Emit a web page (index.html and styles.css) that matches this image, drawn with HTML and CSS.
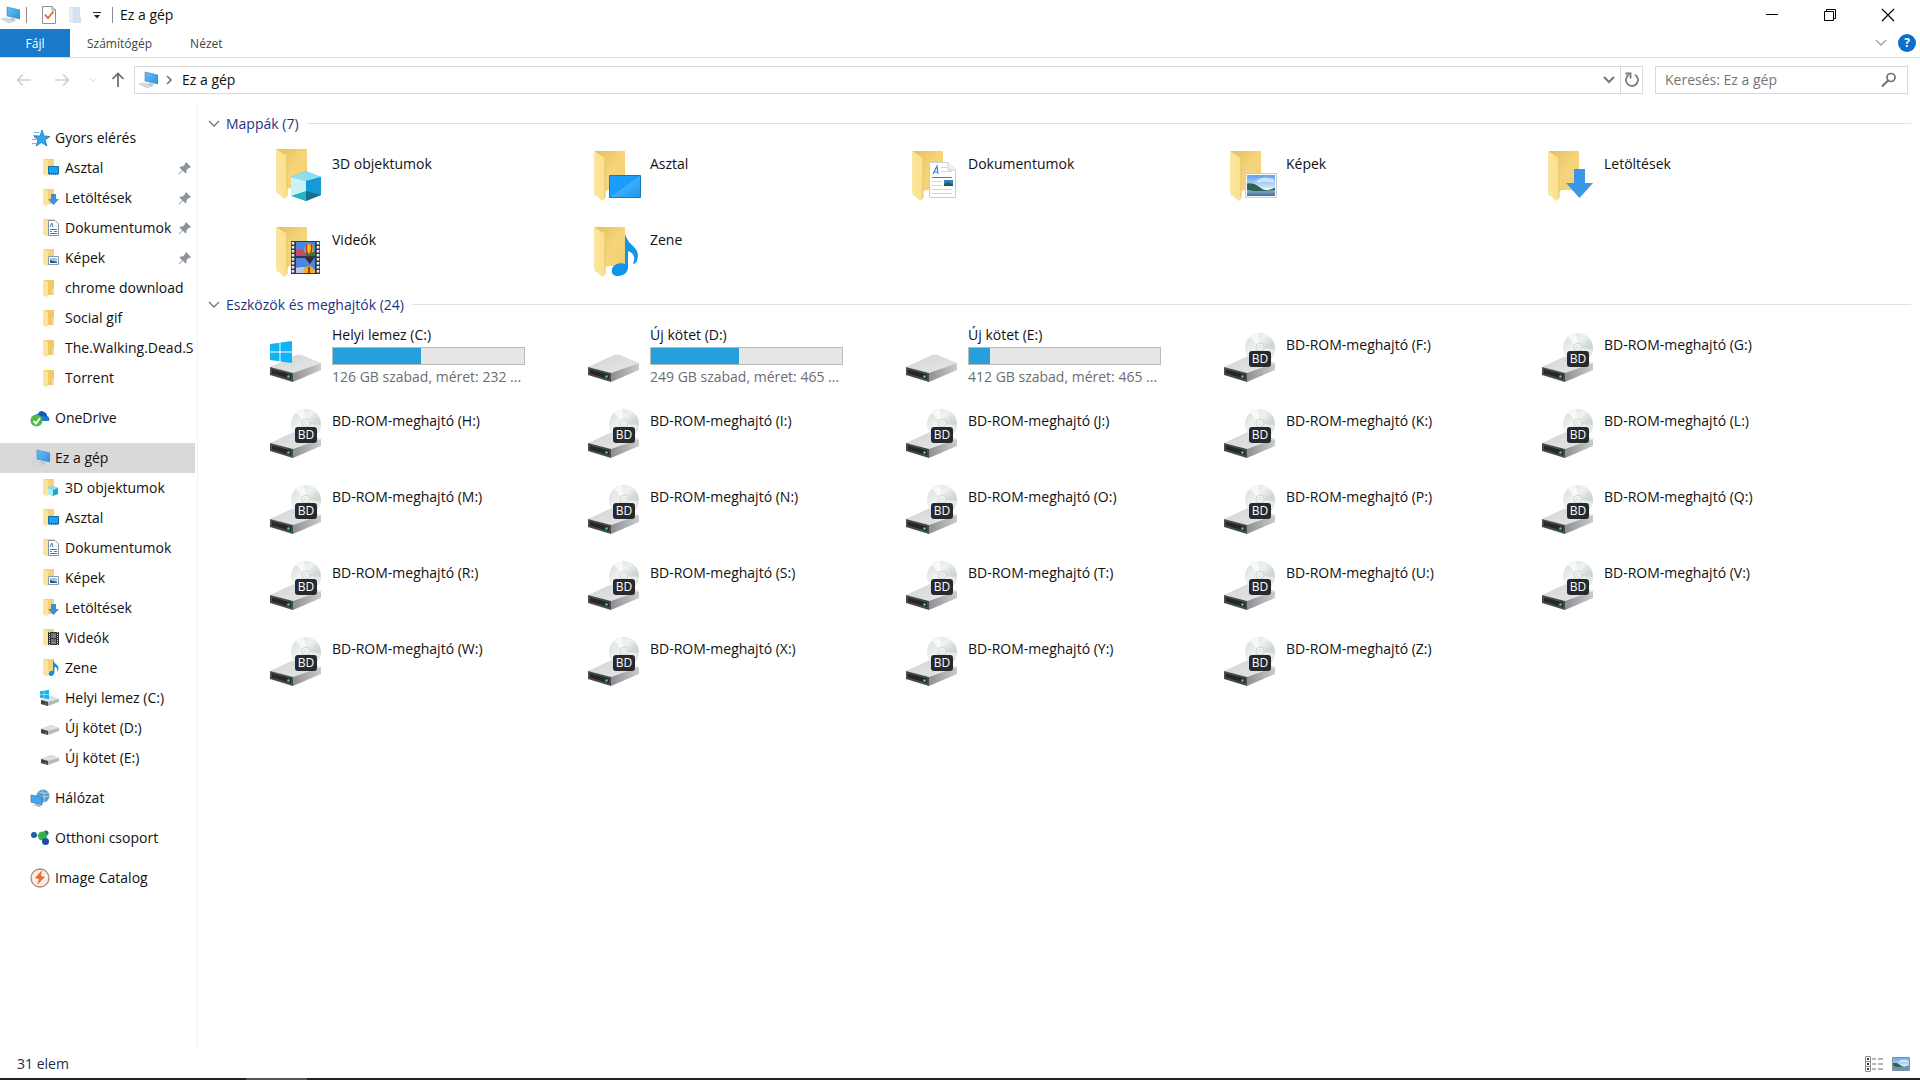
FILE: index.html
```html
<!DOCTYPE html>
<html lang="hu">
<head>
<meta charset="utf-8">
<title>Ez a gép</title>
<meta name="viewport" content="width=device-width, initial-scale=1">
<link rel="stylesheet" href="styles.css">
</head>
<body>
<svg class="sprite" aria-hidden="true">
  <defs>
    <linearGradient id="g-flap" x1="0" y1="0" x2="1" y2="0"><stop offset="0" stop-color="#fbe6a0"/><stop offset="1" stop-color="#fbdf8b"/></linearGradient>
    <linearGradient id="g-back" x1="0" y1="0" x2="1" y2="1"><stop offset="0" stop-color="#e5bf5b"/><stop offset=".5" stop-color="#f6d47a"/><stop offset="1" stop-color="#f2cd6c"/></linearGradient>
    <linearGradient id="g-screen" x1="0" y1="0" x2="1" y2="1"><stop offset="0" stop-color="#18a0fb"/><stop offset=".5" stop-color="#1b9cf7"/><stop offset=".51" stop-color="#3dadfa"/><stop offset="1" stop-color="#1a96f2"/></linearGradient>
    <linearGradient id="g-monitor" x1="0" y1="0" x2="1" y2="1"><stop offset="0" stop-color="#64c1f7"/><stop offset="1" stop-color="#2b93de"/></linearGradient>
    <linearGradient id="g-top" x1="0" y1="0" x2="1" y2="1"><stop offset="0" stop-color="#d3d4d6"/><stop offset="1" stop-color="#e6e7e9"/></linearGradient>
    <linearGradient id="g-side" x1="0" y1="0" x2="1" y2="0"><stop offset="0" stop-color="#8d8f92"/><stop offset="1" stop-color="#c9cbcd"/></linearGradient>
    <linearGradient id="g-disc" x1="0" y1="0" x2="1" y2="1"><stop offset="0" stop-color="#d4d8d6"/><stop offset=".4" stop-color="#eef2f0"/><stop offset=".6" stop-color="#d3dbd7"/><stop offset="1" stop-color="#bfc4c2"/></linearGradient>
    <linearGradient id="g-sky" x1="0" y1="0" x2="0" y2="1"><stop offset="0" stop-color="#5f9df0"/><stop offset="1" stop-color="#dcecf8"/></linearGradient>
    <linearGradient id="g-water" x1="0" y1="0" x2="0" y2="1"><stop offset="0" stop-color="#8fb4c9"/><stop offset="1" stop-color="#456f95"/></linearGradient>
  </defs>

  <symbol id="folder" viewBox="0 0 60 60">
    <path d="M11 7H41V46H24L11 52Z" fill="url(#g-back)"/>
    <path d="M10 7L21 14V54Q20 58 17 56L10 49Z" fill="url(#g-flap)"/>
    <path d="M21 14V54" stroke="#e6c468"/>
  </symbol>
  <symbol id="folder-3d" viewBox="0 0 60 60">
    <use href="#folder" y="-2"/>
    <path d="M25 33L40 27 55 33V51L40 57 25 51Z" fill="#2bb5dc"/>
    <path d="M25 33L40 27 55 33 40 37Z" fill="#8bdff0"/>
    <path d="M25 33L40 37V48L25 52Z" fill="#c9f3f4"/>
    <path d="M55 33L40 37V50L55 51Z" fill="#129bd6"/>
    <path d="M25 52L40 47V57Z" fill="#25b4c6"/><path d="M55 51L40 47V57Z" fill="#16708d"/>
  </symbol>
  <symbol id="folder-desktop" viewBox="0 0 60 60">
    <use href="#folder"/><path d="M25.500 31.500H56.500V53.500H25.500Z" fill="url(#g-screen)" stroke="#1779c4"/>
  </symbol>
  <symbol id="folder-docs" viewBox="0 0 60 60">
    <use href="#folder"/>
    <path d="M27.500 18.500H46L53.500 26V53.500H27.500Z" fill="#fff" stroke="#c9d0d5"/>
    <path d="M46 18.500V26H53.500" fill="#eef1f3" stroke="#c9d0d5"/>
    <path d="M31 30L35 22 36 30M32 28H36M30 33.500H50" fill="none" stroke="#2a8bd0" stroke-width="1.200"/>
    <path d="M39 23.500H45M39 27.500H50M30 37.500H40M30 41.500H40M30 45.500H50M30 49.500H50" stroke="#cfd8df"/>
    <path d="M42 36H51V42H42Z" fill="#2d83bd"/><path d="M42 40L46 38 51 41V42H42Z" fill="#295a52"/>
  </symbol>
  <symbol id="landscape" viewBox="0 0 32 24" preserveAspectRatio="none">
    <path d="M.5.500H31.500V23.500H.5Z" fill="#f7fafc" stroke="#c3cedb"/>
    <path d="M2 2H30V15H2Z" fill="url(#g-sky)"/>
    <path d="M12 7Q18 2 29 6V9Q20 8 12 9Z" fill="#fff" opacity=".6"/>
    <path d="M2 10Q9 9 15 14T30 14V18H2Z" fill="#2f6152"/>
    <path d="M2 16Q16 19 30 16V22H2Z" fill="url(#g-water)"/>
  </symbol>
  <symbol id="folder-pics" viewBox="0 0 60 60"><use href="#folder"/><use href="#landscape" x="25" y="29" width="32" height="25"/></symbol>
  <symbol id="folder-down" viewBox="0 0 60 60">
    <use href="#folder"/><path d="M36 25H47V39H55L41.500 54 28 39H36Z" fill="#3a97e8"/>
  </symbol>
  <symbol id="folder-video" viewBox="0 0 60 60">
    <use href="#folder"/>
    <path d="M25 21H54V54H25Z" fill="#333941"/>
    <path d="M27 22V53M52 22V53" stroke="#f0f0f0" stroke-width="2.500" stroke-dasharray="2.500 1.500"/>
    <path d="M30 22H49V36H30ZM30 38H49V53H30Z" fill="#4b86e4"/>
    <path d="M30 30Q35 27 39 33T49 33V36H30Z" fill="#c84b5d"/><path d="M40 32H49V36H40Z" fill="#2f7a3e"/>
    <path d="M30 48Q38 45 49 50V53H30Z" fill="#b9c9e9"/>
    <ellipse cx="43" cy="29" rx="4.500" ry="5" fill="#f6c21c"/><path d="M41 24.500Q39 29 42 34M45 24.500Q47 29 44 34" stroke="#c02c24" stroke-width="1.500" fill="none"/>
    <path d="M39 38H48L44 44Z" fill="#3a2530"/><path d="M37 53Q38 46 43 46T49 53Z" fill="#eeb023"/><path d="M43 47V53" stroke="#c02c24" stroke-width="2"/>
  </symbol>
  <symbol id="folder-music" viewBox="0 0 60 60">
    <use href="#folder"/>
    <path d="M41 14Q43 21 49 26 57 33 52 43L49 44Q53 34 44 31V47C44 53 39 56 34 56S27 53 28 49 35 42 41 44Z" fill="#0f95ea"/>
  </symbol>

  <symbol id="drive" viewBox="0 0 60 60">
    <path d="M4 42L30 30Q33 29 36 30L55 38 27 48Z" fill="url(#g-top)"/>
    <path d="M27 48L55 38V45L27 57Z" fill="url(#g-side)"/>
    <path d="M4 42L27 48V57L4 50Z" fill="#47494b"/>
    <path d="M6 44.500L25 49.500V54L6 48.500Z" fill="#242627"/>
    <circle cx="22.500" cy="51.500" r="1.300" fill="#43dc58"/>
  </symbol>
  <symbol id="winlogo" viewBox="0 0 22 22"><path d="M0 3L9.500 1.700V10.500H0ZM10.500 1.500L22 0V10.500H10.500ZM0 11.500H9.500V20.300L0 19ZM10.500 11.500H22V22L10.500 20.500Z" fill="#0fb5f2"/></symbol>
  <symbol id="drive-win" viewBox="0 0 60 60"><use href="#drive"/><use href="#winlogo" x="4" y="16" width="22" height="22"/></symbol>
  <symbol id="drive-bd" viewBox="0 0 60 60">
    <use href="#drive"/>
    <circle cx="40" cy="23" r="15" fill="url(#g-disc)"/>
    <path d="M40 23L30 12A15 15 0 0 1 38 8Z" fill="#fff" opacity=".7"/><path d="M40 23L52 32A15 15 0 0 0 55 24Z" fill="#fff" opacity=".5"/>
    <circle cx="40" cy="22" r="4" fill="#f3f5f4" stroke="#cfd6d2"/><circle cx="40" cy="22" r="1.500" fill="#fff" stroke="#bbb" stroke-width=".5"/>
  </symbol>

  <!-- Small versions for the navigation pane and the title bar -->
  <symbol id="s-folder" viewBox="0 0 20 20"><path d="M4 2H14V17H8L4 18Z" fill="#f1ca66"/><path d="M3 2L8 4V18L6 19 3 17Z" fill="#fbe4a0"/><path d="M12 11L14 10V16L12 17Z" fill="#f9dd90"/></symbol>
  <symbol id="s-base" viewBox="0 0 20 20"><path d="M4 1H14V16H8L4 17Z" fill="#f3d27b"/><path d="M3 1L8 3V17L6 18 3 16Z" fill="#fbe4a0"/></symbol>
  <symbol id="s-desktop" viewBox="0 0 20 20"><use href="#s-base"/><path d="M8.500 8.500H18.500V16H8.500Z" fill="#18a4f4" stroke="#176ca5"/><path d="M9 16H18" stroke="#123f66" stroke-dasharray="1 1"/></symbol>
  <symbol id="s-down" viewBox="0 0 20 20"><use href="#s-base"/><path d="M11 6H16V11H19L13.500 17 8 11H11Z" fill="#3b8dde"/></symbol>
  <symbol id="s-docs" viewBox="0 0 20 20"><use href="#s-base"/><path d="M8.500 2.500H15L18.500 6V17.500H8.500Z" fill="#fff" stroke="#8396a5"/><path d="M10 9L12 5 13 9M10 11.500H17M10 13.500H12M14 13.500H17M10 15.500H17" fill="none" stroke="#2e86c2"/></symbol>
  <symbol id="s-pics" viewBox="0 0 20 20"><use href="#s-base"/><path d="M8.500 8.500H18.500V16.500H8.500Z" fill="#fff" stroke="#8c9cad"/><path d="M10 10H17V15H10Z" fill="#9fc7ea"/><path d="M10 12L17 14V15H10Z" fill="#2d5f7d"/></symbol>
  <symbol id="s-3d" viewBox="0 0 20 20"><use href="#s-base"/><path d="M8 10L13 8 18 10V16L13 18 8 16Z" fill="#1aa7d8"/><path d="M8 10L13 8 18 10 13 12Z" fill="#8be0f0"/><path d="M8 10L13 12V18L8 16Z" fill="#aeeef0"/></symbol>
  <symbol id="s-video" viewBox="0 0 20 20"><use href="#s-base"/><path d="M8 4H19V17H8Z" fill="#2e3034"/><path d="M9.500 4V17M17.500 4V17" stroke="#ddd" stroke-dasharray="1 1"/><path d="M11 5H16V10H11ZM11 11H16V16H11Z" fill="#6a6f8e"/><path d="M13 7H16V10H13ZM12 14H15V16H12Z" fill="#a07a5a"/></symbol>
  <symbol id="s-music" viewBox="0 0 20 20"><use href="#s-base"/><path d="M13 2Q14 5 17 7 20 10 17 14 18 9 14.500 9V14Q14 18 11 18T9 15 13 13Z" fill="#158ee0"/></symbol>
  <symbol id="s-drive" viewBox="0 0 20 20"><path d="M1 11L11 7 19 10V13L8 17 1 15Z" fill="#b6b8ba"/><path d="M1 11L11 7 19 10 8 13Z" fill="#dedfe1"/><path d="M1 11L8 13V17L1 15Z" fill="#3f4143"/><path d="M5 15H7" stroke="#57a564"/></symbol>
  <symbol id="s-drive-win" viewBox="0 0 20 20"><use href="#s-drive" y="1"/><use href="#winlogo" x="0" y="2" width="9" height="9"/></symbol>
  <symbol id="s-pc" viewBox="0 0 20 20"><path d="M7 2L20 5V14L7 11Z" fill="url(#g-monitor)" stroke="#3c83b9" stroke-width=".6"/><path d="M11 13L16 14 14 16 9 15Z" fill="#b9c4cc"/><path d="M1 14L6 13 15 16 9 18Z" fill="#d4dade" stroke="#b9c1c7" stroke-width=".5"/></symbol>
  <symbol id="s-star" viewBox="0 0 20 20"><path d="M12 2L14 8 20 8.500 15 12 17 18 11.500 14.500 6 18 8 12 4 8.500 10 8Z" fill="#33a5ec" stroke="#1c77bd" stroke-width=".8"/><path d="M4 4.500H9M3 7.500H8M2 11.500H6M2 15.500H6" stroke="#68b9ec"/></symbol>
  <symbol id="s-cloud" viewBox="0 0 20 20"><path d="M5 10Q4 6 8 6 10 1 14 4 17 5 17 8 20 9 19 13H6Z" fill="#0c5bb0"/><path d="M8 13Q7 9 11 9 13 6 16 9 20 9 19 13Z" fill="#1a7ad6"/><circle cx="6.500" cy="12.500" r="6" fill="#4fb944"/><path d="M3.500 13L6 15.500 10 10" fill="none" stroke="#fff" stroke-width="1.800"/></symbol>
  <symbol id="s-net" viewBox="0 0 20 20"><circle cx="13" cy="8" r="6.500" fill="#5a9cc9"/><path d="M9 4Q13 6 18 5M8 8Q14 10 19 8M12 2Q16 7 14 14" fill="none" stroke="#a7d3ee"/><path d="M1 7L12 9V17L1 14Z" fill="#43a7ec" stroke="#2779b4" stroke-width=".7"/><path d="M5 16L12 18 9 19 4 17Z" fill="#9aadb9"/></symbol>
  <symbol id="s-home" viewBox="0 0 20 20"><path d="M4 7L12 8 15 14" stroke="#a8c6d8" fill="none"/><circle cx="4" cy="7" r="3" fill="#1f5ea8"/><circle cx="16" cy="5" r="2.500" fill="#1e6f8c"/><circle cx="12.500" cy="8" r="4.500" fill="#36b24a"/><circle cx="15.500" cy="13.500" r="3.500" fill="#1b4fa8"/></symbol>
  <symbol id="s-catalog" viewBox="0 0 20 20"><circle cx="10" cy="10" r="9" fill="#f8eeea" stroke="#b4877a" stroke-width="1.300"/><path d="M12 2L5 10 9 11 7 17 15 9 11 8Z" fill="#ef6b2b"/></symbol>

  <symbol id="pin" viewBox="0 0 14 14"><path d="M8 1L13 6 11.500 7 11 6.800 8.500 9.300V11.500L7.500 12.500 4.800 9.800 1 13.500.5 13 4.200 9.200 1.500 6.500 2.500 5.500H4.700L7.200 3 7 2.500Z" fill="#8b949c"/></symbol>
  <symbol id="chevron" viewBox="0 0 12 8"><path d="M1 1L6 6 11 1" fill="none" stroke="currentColor" stroke-width="1.300"/></symbol>
  <symbol id="arrow" viewBox="0 0 16 16"><path d="M15 8H1.500M7 2.500L1.500 8 7 13.500" fill="none" stroke="currentColor" stroke-width="1.700"/></symbol>
</svg>

<div class="window">
  <header class="titlebar">
    <svg class="ico20"><use href="#s-pc"/></svg>
    <span class="sep"></span>
    <button class="quick" aria-label="Tulajdonságok"><svg width="16" height="20" viewBox="0 0 16 20"><path d="M1.500 1.500H11L14.500 5V18.500H1.500Z" fill="#fdfdfd" stroke="#8e9296"/><path d="M11 1.500V5H14.500" fill="none" stroke="#8e9296"/><path d="M4 9.500L7 13 12.500 6.500" fill="none" stroke="#dd6a35" stroke-width="1.800"/></svg></button>
    <button class="quick" aria-label="Új mappa"><svg width="14" height="18" viewBox="0 0 14 18"><path d="M1 1H12V10L13 11V17H1Z" fill="#d6e0f1"/><path d="M1 1L5 3V17H1Z" fill="#e6edf8"/></svg></button>
    <button class="quick quick-menu" aria-label="Testreszabás"><svg width="8" height="8" viewBox="0 0 8 8"><path d="M0 1.500H8" stroke="#222"/><path d="M1 4H7L4 7.500Z" fill="#222"/></svg></button>
    <span class="sep"></span>
    <h1 class="title">Ez a gép</h1>
    <div class="controls">
      <button class="control" aria-label="Kis méret"><svg width="14" height="14" viewBox="0 0 14 14"><path d="M1 6.500H13" stroke="#000"/></svg></button>
      <button class="control" aria-label="Előző méret"><svg width="14" height="14" viewBox="0 0 14 14"><path d="M1.500 3.500H10.500V12.500H1.500ZM3.500 3.500V1.500H12.500V10.500H10.500" fill="none" stroke="#000"/></svg></button>
      <button class="control" aria-label="Bezárás"><svg width="14" height="14" viewBox="0 0 14 14"><path d="M1 1L13 13M13 1L1 13" stroke="#000" stroke-width="1.200"/></svg></button>
    </div>
  </header>

  <nav class="ribbon">
    <button class="tab tab-file">Fájl</button>
    <button class="tab">Számítógép</button>
    <button class="tab">Nézet</button>
    <button class="ribbon-toggle" aria-label="Menüszalag kibontása"><svg width="14" height="8"><use href="#chevron"/></svg></button>
    <button class="help" aria-label="Súgó">?</button>
  </nav>

  <div class="toolbar">
    <button class="nav-btn" aria-label="Vissza"><svg width="16" height="16"><use href="#arrow"/></svg></button>
    <button class="nav-btn nav-forward" aria-label="Előre"><svg width="16" height="16"><use href="#arrow"/></svg></button>
    <button class="nav-btn nav-recent" aria-label="Legutóbbi helyek"><svg width="8" height="6"><use href="#chevron"/></svg></button>
    <button class="nav-btn nav-up" aria-label="Fel"><svg width="16" height="16"><use href="#arrow"/></svg></button>
    <div class="address">
      <svg class="ico20"><use href="#s-pc"/></svg>
      <svg class="crumb-arrow" width="6" height="10" viewBox="0 0 6 10"><path d="M1 1L5 5 1 9" fill="none" stroke="currentColor" stroke-width="1.700"/></svg>
      <a class="crumb" href="#">Ez a gép</a>
      <button class="address-btn" aria-label="Előző helyek"><svg width="12" height="8" viewBox="0 0 12 8"><path d="M1 1L6 6 11 1" fill="none" stroke="currentColor" stroke-width="2"/></svg></button>
      <button class="address-btn refresh" aria-label="Frissítés"><svg width="16" height="16" viewBox="0 0 16 16"><path d="M11 2.700A6 6 0 1 1 4.500 3" fill="none" stroke="currentColor" stroke-width="1.800"/><path d="M1.500 1.500H6.500V6.500" fill="none" stroke="currentColor" stroke-width="1.800"/></svg></button>
    </div>
    <div class="search">
      <input class="search-input" type="text" placeholder="Keresés: Ez a gép" aria-label="Keresés: Ez a gép">
      <svg width="16" height="16" viewBox="0 0 16 16"><circle cx="10" cy="5.500" r="4" fill="none" stroke="currentColor" stroke-width="1.700"/><path d="M7 8.500L1 14.500" stroke="currentColor" stroke-width="2"/></svg>
    </div>
  </div>

  <div class="body">
    <nav class="tree" aria-label="Navigációs ablak">
      <ul class="branch">
        <li><a class="node" href="#"><svg class="ico20"><use href="#s-star"/></svg>Gyors elérés</a></li>
        <li><a class="node leaf" href="#"><svg class="ico20"><use href="#s-desktop"/></svg>Asztal<svg class="pin"><use href="#pin"/></svg></a></li>
        <li><a class="node leaf" href="#"><svg class="ico20"><use href="#s-down"/></svg>Letöltések<svg class="pin"><use href="#pin"/></svg></a></li>
        <li><a class="node leaf" href="#"><svg class="ico20"><use href="#s-docs"/></svg>Dokumentumok<svg class="pin"><use href="#pin"/></svg></a></li>
        <li><a class="node leaf" href="#"><svg class="ico20"><use href="#s-pics"/></svg>Képek<svg class="pin"><use href="#pin"/></svg></a></li>
        <li><a class="node leaf" href="#"><svg class="ico20"><use href="#s-folder"/></svg>chrome download</a></li>
        <li><a class="node leaf" href="#"><svg class="ico20"><use href="#s-folder"/></svg>Social gif</a></li>
        <li><a class="node leaf" href="#"><svg class="ico20"><use href="#s-folder"/></svg>The.Walking.Dead.S</a></li>
        <li><a class="node leaf" href="#"><svg class="ico20"><use href="#s-folder"/></svg>Torrent</a></li>
      </ul>
      <ul class="branch">
        <li><a class="node" href="#"><svg class="ico20"><use href="#s-cloud"/></svg>OneDrive</a></li>
      </ul>
      <ul class="branch">
        <li><a class="node selected" href="#" aria-current="page"><svg class="ico20"><use href="#s-pc"/></svg>Ez a gép</a></li>
        <li><a class="node leaf" href="#"><svg class="ico20"><use href="#s-3d"/></svg>3D objektumok</a></li>
        <li><a class="node leaf" href="#"><svg class="ico20"><use href="#s-desktop"/></svg>Asztal</a></li>
        <li><a class="node leaf" href="#"><svg class="ico20"><use href="#s-docs"/></svg>Dokumentumok</a></li>
        <li><a class="node leaf" href="#"><svg class="ico20"><use href="#s-pics"/></svg>Képek</a></li>
        <li><a class="node leaf" href="#"><svg class="ico20"><use href="#s-down"/></svg>Letöltések</a></li>
        <li><a class="node leaf" href="#"><svg class="ico20"><use href="#s-video"/></svg>Videók</a></li>
        <li><a class="node leaf" href="#"><svg class="ico20"><use href="#s-music"/></svg>Zene</a></li>
        <li><a class="node leaf" href="#"><svg class="ico20"><use href="#s-drive-win"/></svg>Helyi lemez (C:)</a></li>
        <li><a class="node leaf" href="#"><svg class="ico20"><use href="#s-drive"/></svg>Új kötet (D:)</a></li>
        <li><a class="node leaf" href="#"><svg class="ico20"><use href="#s-drive"/></svg>Új kötet (E:)</a></li>
      </ul>
      <ul class="branch">
        <li><a class="node" href="#"><svg class="ico20"><use href="#s-net"/></svg>Hálózat</a></li>
      </ul>
      <ul class="branch">
        <li><a class="node" href="#"><svg class="ico20"><use href="#s-home"/></svg>Otthoni csoport</a></li>
      </ul>
      <ul class="branch">
        <li><a class="node" href="#"><svg class="ico20"><use href="#s-catalog"/></svg>Image Catalog</a></li>
      </ul>
    </nav>

    <main class="content">
      <section>
        <h2 class="group"><svg class="group-arrow"><use href="#chevron"/></svg>Mappák (7)</h2>
        <ul class="tiles">
          <li class="tile"><svg class="ico60"><use href="#folder-3d"/></svg><span class="name">3D objektumok</span></li>
          <li class="tile"><svg class="ico60"><use href="#folder-desktop"/></svg><span class="name">Asztal</span></li>
          <li class="tile"><svg class="ico60"><use href="#folder-docs"/></svg><span class="name">Dokumentumok</span></li>
          <li class="tile"><svg class="ico60"><use href="#folder-pics"/></svg><span class="name">Képek</span></li>
          <li class="tile"><svg class="ico60"><use href="#folder-down"/></svg><span class="name">Letöltések</span></li>
          <li class="tile"><svg class="ico60"><use href="#folder-video"/></svg><span class="name">Videók</span></li>
          <li class="tile"><svg class="ico60"><use href="#folder-music"/></svg><span class="name">Zene</span></li>
        </ul>
      </section>
      <section>
        <h2 class="group"><svg class="group-arrow"><use href="#chevron"/></svg>Eszközök és meghajtók (24)</h2>
        <ul class="tiles">
          <li class="tile"><svg class="ico60"><use href="#drive-win"/></svg><div class="volume"><span>Helyi lemez (C:)</span><div class="usage"><div class="used" style="width:46%"></div></div><span class="free">126 GB szabad, méret: 232 ...</span></div></li>
          <li class="tile"><svg class="ico60"><use href="#drive"/></svg><div class="volume"><span>Új kötet (D:)</span><div class="usage"><div class="used" style="width:46%"></div></div><span class="free">249 GB szabad, méret: 465 ...</span></div></li>
          <li class="tile"><svg class="ico60"><use href="#drive"/></svg><div class="volume"><span>Új kötet (E:)</span><div class="usage"><div class="used" style="width:11%"></div></div><span class="free">412 GB szabad, méret: 465 ...</span></div></li>
          <li class="tile"><svg class="ico60"><use href="#drive-bd"/></svg><span class="badge">BD</span><span class="name">BD-ROM-meghajtó (F:)</span></li>
          <li class="tile"><svg class="ico60"><use href="#drive-bd"/></svg><span class="badge">BD</span><span class="name">BD-ROM-meghajtó (G:)</span></li>
          <li class="tile"><svg class="ico60"><use href="#drive-bd"/></svg><span class="badge">BD</span><span class="name">BD-ROM-meghajtó (H:)</span></li>
          <li class="tile"><svg class="ico60"><use href="#drive-bd"/></svg><span class="badge">BD</span><span class="name">BD-ROM-meghajtó (I:)</span></li>
          <li class="tile"><svg class="ico60"><use href="#drive-bd"/></svg><span class="badge">BD</span><span class="name">BD-ROM-meghajtó (J:)</span></li>
          <li class="tile"><svg class="ico60"><use href="#drive-bd"/></svg><span class="badge">BD</span><span class="name">BD-ROM-meghajtó (K:)</span></li>
          <li class="tile"><svg class="ico60"><use href="#drive-bd"/></svg><span class="badge">BD</span><span class="name">BD-ROM-meghajtó (L:)</span></li>
          <li class="tile"><svg class="ico60"><use href="#drive-bd"/></svg><span class="badge">BD</span><span class="name">BD-ROM-meghajtó (M:)</span></li>
          <li class="tile"><svg class="ico60"><use href="#drive-bd"/></svg><span class="badge">BD</span><span class="name">BD-ROM-meghajtó (N:)</span></li>
          <li class="tile"><svg class="ico60"><use href="#drive-bd"/></svg><span class="badge">BD</span><span class="name">BD-ROM-meghajtó (O:)</span></li>
          <li class="tile"><svg class="ico60"><use href="#drive-bd"/></svg><span class="badge">BD</span><span class="name">BD-ROM-meghajtó (P:)</span></li>
          <li class="tile"><svg class="ico60"><use href="#drive-bd"/></svg><span class="badge">BD</span><span class="name">BD-ROM-meghajtó (Q:)</span></li>
          <li class="tile"><svg class="ico60"><use href="#drive-bd"/></svg><span class="badge">BD</span><span class="name">BD-ROM-meghajtó (R:)</span></li>
          <li class="tile"><svg class="ico60"><use href="#drive-bd"/></svg><span class="badge">BD</span><span class="name">BD-ROM-meghajtó (S:)</span></li>
          <li class="tile"><svg class="ico60"><use href="#drive-bd"/></svg><span class="badge">BD</span><span class="name">BD-ROM-meghajtó (T:)</span></li>
          <li class="tile"><svg class="ico60"><use href="#drive-bd"/></svg><span class="badge">BD</span><span class="name">BD-ROM-meghajtó (U:)</span></li>
          <li class="tile"><svg class="ico60"><use href="#drive-bd"/></svg><span class="badge">BD</span><span class="name">BD-ROM-meghajtó (V:)</span></li>
          <li class="tile"><svg class="ico60"><use href="#drive-bd"/></svg><span class="badge">BD</span><span class="name">BD-ROM-meghajtó (W:)</span></li>
          <li class="tile"><svg class="ico60"><use href="#drive-bd"/></svg><span class="badge">BD</span><span class="name">BD-ROM-meghajtó (X:)</span></li>
          <li class="tile"><svg class="ico60"><use href="#drive-bd"/></svg><span class="badge">BD</span><span class="name">BD-ROM-meghajtó (Y:)</span></li>
          <li class="tile"><svg class="ico60"><use href="#drive-bd"/></svg><span class="badge">BD</span><span class="name">BD-ROM-meghajtó (Z:)</span></li>
        </ul>
      </section>
    </main>
  </div>

  <footer class="statusbar">
    <span>31 elem</span>
    <div class="views">
      <button class="view" aria-label="Részletek"><svg width="20" height="18" viewBox="0 0 20 18"><path d="M1.500 1.500H6.500V16.500H1.500ZM1.500 6.500H6.500M1.500 11.500H6.500" fill="none" stroke="#8a8d90"/><path d="M3 4H5M3 9H5M3 14H5" stroke="#333" stroke-width="2"/><path d="M8 4H12M14 4H19M8 9H12M14 9H19M8 14H12M14 14H19" stroke="#6b6e70" stroke-width="1.200"/></svg></button>
      <button class="view" aria-label="Nagy ikonok"><svg width="18" height="14" viewBox="0 0 18 14"><use href="#landscape" width="18" height="14"/><path d="M.5.500H17.500V13.500H.5Z" fill="none" stroke="#7d8d9c"/></svg></button>
    </div>
  </footer>
  <div class="taskbar"><div class="taskbar-active"></div></div>
</div>
</body>
</html>
```
FILE: styles.css
```css
* { box-sizing: border-box; }

body {
  margin: 0;
  background: #fff;
  color: #111;
  font: 14px/20px "Open Sans", "Noto Sans", sans-serif;
}

button {
  display: flex;
  align-items: center;
  justify-content: center;
  padding: 0;
  border: 0;
  background: none;
  color: inherit;
  font: inherit;
}

a { color: inherit; text-decoration: none; }
ul { margin: 0; padding: 0; list-style: none; }
svg { flex: none; display: block; }

.sprite { position: absolute; width: 0; height: 0; }
.ico20 { width: 20px; height: 20px; }
.ico60 { width: 60px; height: 60px; }

.window {
  display: flex;
  flex-direction: column;
  min-height: 100vh;
}

/* Title bar */
.titlebar {
  display: flex;
  align-items: center;
  height: 29px;
}
.sep { width: 1px; height: 16px; margin: 0 7px 0 6px; background: #8c8c8c; }
.quick { width: 26px; height: 28px; }
.quick:first-of-type { margin-left: 2px; }
.quick-menu { width: 18px; }
.title { margin: 0; font-size: 14px; font-weight: 400; }
.controls { display: flex; margin: 0 3px 0 auto; }
.control { width: 58px; height: 28px; }

/* Ribbon */
.ribbon {
  display: flex;
  align-items: stretch;
  height: 29px;
  border-bottom: 1px solid #dadbdc;
  color: #444;
  font-size: 12px;
}
.tab { padding: 2px 21px 0 17px; }
.tab-file { width: 70px; padding: 2px 0 0; background: #1979ca; color: #fff; }
.ribbon-toggle { width: 26px; margin-left: auto; color: #a0a0a0; }
.help {
  align-self: center;
  width: 18px;
  height: 18px;
  margin: 0 4px;
  border-radius: 50%;
  background: #0b6fcb;
  color: #fff;
  font-weight: 700;
}

/* Navigation and address row */
.toolbar {
  display: flex;
  align-items: center;
  padding: 8px 12px 10px 5px;
}
.nav-btn { width: 38px; height: 28px; color: #d0d0d0; }
.nav-forward svg { transform: rotate(180deg); }
.nav-recent { width: 24px; }
.nav-up { width: 26px; margin-right: 3px; color: #6a6a6a; }
.nav-up svg { transform: rotate(90deg); }
.address {
  display: flex;
  flex: 1;
  align-items: center;
  height: 28px;
  padding-left: 3px;
  border: 1px solid #d9d9d9;
}
.crumb-arrow { margin: 0 10px 0 8px; color: #777; }
.address-btn { width: 22px; height: 26px; color: #777; }
.crumb + .address-btn { margin-left: auto; }
.refresh { border-left: 1px solid #d9d9d9; }
.search {
  display: flex;
  align-items: center;
  width: 253px;
  height: 28px;
  margin-left: 12px;
  padding: 0 10px 0 9px;
  border: 1px solid #d9d9d9;
  color: #707070;
}
.search-input {
  flex: 1;
  min-width: 0;
  padding: 0;
  border: 0;
  outline: 0;
  background: none;
  font: inherit;
}
.search-input::placeholder { color: #767676; opacity: 1; }

/* Main area */
.body { display: flex; flex: 1; }

.tree {
  flex: none;
  width: 198px;
  padding: 19px 2px 0 0;
  border-right: 1px solid #f3f3f3;
}
.branch { margin-bottom: 10px; }
.node {
  display: flex;
  align-items: center;
  gap: 5px;
  height: 30px;
  padding-left: 30px;
  overflow: hidden;
  white-space: nowrap;
}
.leaf { padding-left: 40px; }
.selected { background: #d9d9d9; }
.pin { width: 14px; height: 14px; margin: 0 3px 0 auto; }

.content { flex: 1; padding: 5px 9px 0 10px; }
.group {
  display: flex;
  align-items: center;
  gap: 6px;
  height: 29px;
  margin: 0;
  color: #1e3287;
  font-size: 14px;
  font-weight: 400;
}
.group::after {
  content: "";
  flex: 1;
  height: 1px;
  margin-left: 2px;
  background: #e2e2e2;
}
.group-arrow { width: 12px; height: 8px; color: #777; }
.tiles {
  display: grid;
  grid-template-columns: repeat(auto-fill, 318px);
  padding-left: 58px;
}
.tile {
  position: relative;
  display: flex;
  gap: 6px;
  height: 76px;
  padding-top: 6px;
}
.name { margin-top: 10px; }
.volume { display: flex; flex-direction: column; gap: 2px; width: 193px; white-space: nowrap; }
.usage { height: 18px; border: 1px solid #bcbcbc; background: #e6e6e6; }
.used { height: 100%; background: #26a0da; }
.free { color: #6d6d6d; }
.badge {
  position: absolute;
  top: 32px;
  left: 29px;
  width: 22px;
  border-radius: 3px;
  background: #28292b;
  color: #fff;
  font-size: 12px;
  line-height: 16px;
  text-align: center;
}

/* Status bar and the top edge of the taskbar */
.statusbar {
  display: flex;
  align-items: center;
  justify-content: space-between;
  height: 30px;
  padding: 2px 10px 0 17px;
  color: #1e2c46;
}
.views { display: flex; align-items: center; gap: 8px; }
.taskbar { height: 2px; padding-left: 246px; background: #222; }
.taskbar-active { width: 61px; height: 2px; background: #555; }
```
